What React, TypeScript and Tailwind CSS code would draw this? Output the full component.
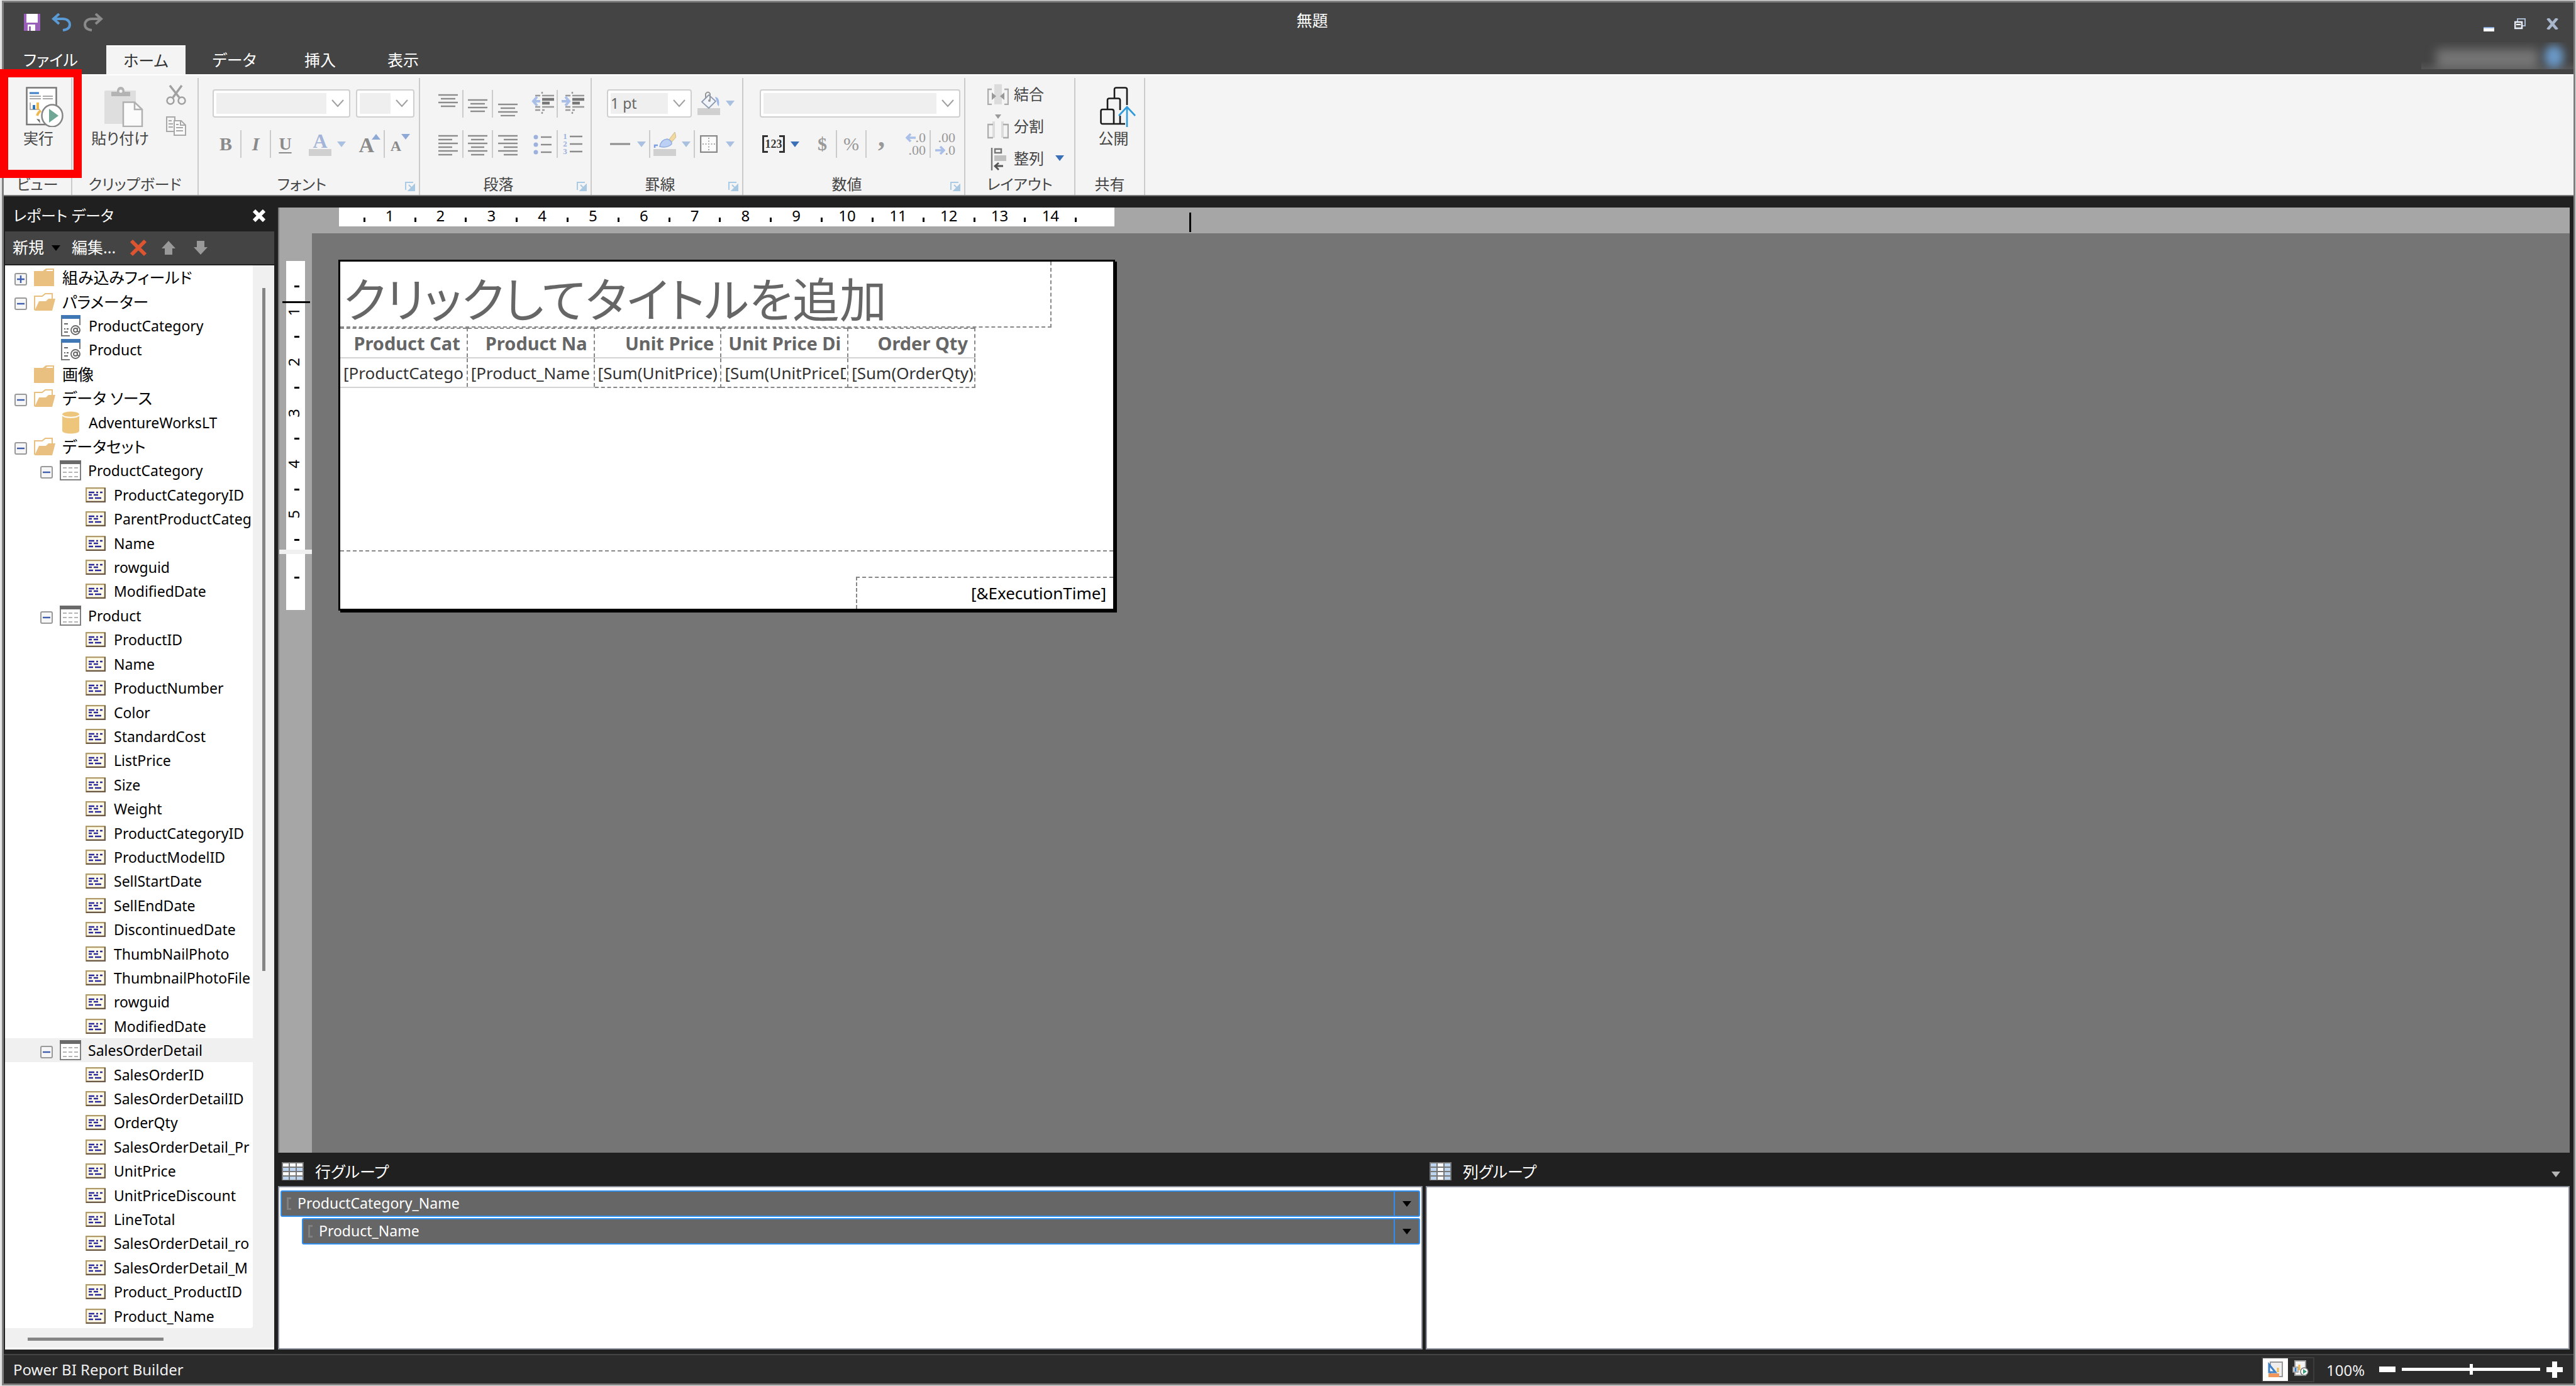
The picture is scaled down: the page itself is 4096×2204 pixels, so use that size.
import type { ReactNode } from 'react';

type IconProps = { className?: string };

/* ---------- small shared glyphs ---------- */

const Arrow = ({ className = 'text-[#a9c0e0]' }: IconProps) => (
  <svg aria-hidden="true" width="14" height="9" viewBox="0 0 14 9" className={`shrink-0 ${className}`}>
    <path d="M0 0H14L7 9Z" fill="currentColor" />
  </svg>
);

const Chevron = () => (
  <svg aria-hidden="true" width="20" height="13" viewBox="0 0 20 13" className="pointer-events-none shrink-0">
    <path d="M1 1L10 11L19 1" fill="none" stroke="#a0a0a0" strokeWidth="2" />
  </svg>
);

const Launcher = () => (
  <svg aria-hidden="true" width="16" height="15" viewBox="0 0 16 15">
    <path d="M1 13V1H13" fill="none" stroke="#a9cbe6" strokeWidth="2" />
    <path d="M6 5L11 10M15 5V15H5Z" fill="#a9c8e2" stroke="#a9c8e2" strokeWidth="2" />
  </svg>
);

/* ---------- ribbon icons ---------- */

const SaveIcon = () => (
  <svg aria-hidden="true" width="26" height="27" viewBox="0 0 26 27">
    <path d="M0 0H26V27H0Z" fill="#9a5fb8" />
    <path d="M4 0H22V14H4ZM6 17H18V27H6Z" fill="#fff" />
    <path d="M8 20H11V27H8Z" fill="#9a5fb8" />
  </svg>
);

const UndoIcon = ({ className }: IconProps) => (
  <svg aria-hidden="true" width="32" height="29" viewBox="0 0 32 29" className={className}>
    <path d="M12 1L3 9L12 17M3 9H18C26 9 29 14 29 18C29 23 26 26 18 27" fill="none" stroke="currentColor" strokeWidth="4" />
  </svg>
);

const RunIcon = () => (
  <svg aria-hidden="true" width="60" height="64" viewBox="0 0 60 64">
    <path d="M1.5 1.5H48.500V60H1.5Z" fill="#fff" stroke="#777" strokeWidth="2.500" />
    <path d="M6 10H21" stroke="#3f7fc4" strokeWidth="3" />
    <path d="M6 15H24M27 15H43M6 19H24M27 19H43" stroke="#aaa" strokeWidth="1.800" />
    <path d="M7 25V36H22" fill="none" stroke="#999" strokeWidth="1.500" />
    <path d="M11 29H15V36H11Z" fill="#2f75b5" />
    <path d="M17 25H21V36H17Z" fill="#f0b950" />
    <path d="M18 46Q20 40 24 38" fill="none" stroke="#f0b950" strokeWidth="4" />
    <path d="M17 51L22 52L23 58Z" fill="#666" />
    <ellipse cx="42" cy="46" rx="16.500" ry="17.500" fill="#fff" stroke="#858585" strokeWidth="2.500" />
    <path d="M37 35L52 46L37 57Z" fill="#6fa695" />
  </svg>
);

const PasteIcon = () => (
  <svg aria-hidden="true" width="62" height="64" viewBox="0 0 62 64">
    <path d="M0 8Q0 6 2 6H50V59H0Z" fill="#dedede" />
    <path d="M11 15V8H20Q20 0 26 0Q32 0 32 8H41V15Z" fill="#b3b3b3" />
    <circle cx="26" cy="7" r="2.500" fill="#f4f4f4" />
    <path d="M30 24.500H48L60 36V63H30Z" fill="#fbfbfb" stroke="#b0b0b0" strokeWidth="2.500" />
    <path d="M48 24.500V36H60" fill="none" stroke="#b0b0b0" strokeWidth="2.500" />
  </svg>
);

const CutIcon = () => (
  <svg aria-hidden="true" width="32" height="32" viewBox="0 0 32 32" fill="none" stroke="#a0a0a0">
    <path d="M6 1L21 20M25 1L11 20" strokeWidth="3.500" />
    <circle cx="7" cy="25" r="5.500" strokeWidth="2.500" />
    <circle cx="25" cy="25" r="5.500" strokeWidth="2.500" />
  </svg>
);

const CopyIcon = () => (
  <svg aria-hidden="true" width="32" height="32" viewBox="0 0 32 32" stroke="#a8a8a8" strokeWidth="2">
    <path d="M12 24H1V1H14V6" fill="none" />
    <path d="M4 7H9M4 12H11M4 17H11" />
    <path d="M13 7H24L31 14V30H13Z" fill="#fafafa" />
    <path d="M23 7V14H31M16 13H20M16 18H27M16 23H27" fill="none" />
  </svg>
);

/* Horizontal bars; each entry is [x, y, width]. */
const Bars = ({ bars }: { bars: number[][] }) => (
  <svg aria-hidden="true" width="32" height="40" viewBox="0 0 32 40">
    {bars.map(([x, y, w]) => (
      <path key={y} d={`M${x} ${y}H${x + w}`} stroke="#8c8c8c" strokeWidth="2.400" />
    ))}
  </svg>
);

const IndentIcon = ({ inward }: { inward?: boolean }) => (
  <svg aria-hidden="true" width="36" height="44" viewBox="0 0 36 44">
    <path d="M6 9H14M17 9H36M6 27H14M17 27H36M6 32H14M17 32H21M17 3V6M17 35V38" stroke="#999" strokeWidth="2.400" />
    <path d="M17 15H36M17 21H29" stroke="#777" strokeWidth="4.500" />
    {inward ? (
      <path d="M0 18H10M6 11L12 18L6 25" fill="none" stroke="#a9bfe8" strokeWidth="4" />
    ) : (
      <path d="M14 18H4M9 11L3 18L9 25" fill="none" stroke="#a9bfe8" strokeWidth="4" />
    )}
  </svg>
);

const BulletIcon = () => (
  <svg aria-hidden="true" width="32" height="40" viewBox="0 0 32 40">
    {[9, 21, 33].map((y) => (
      <g key={y}>
        <circle cx="5" cy={y} r="3.500" fill="#9db1dd" />
        <path d={`M13 ${y}H30`} stroke="#8c8c8c" strokeWidth="2.400" />
      </g>
    ))}
  </svg>
);

const NumberedIcon = () => (
  <span className="flex items-center gap-[4px]" aria-hidden="true">
    <span className="flex flex-col font-['Liberation_Serif',serif] text-[13px] leading-[12px] font-bold text-[#9db1dd]">
      <span>1</span>
      <span>2</span>
      <span>3</span>
    </span>
    <svg width="20" height="36" viewBox="0 0 20 36">
      <path d="M0 6H20M0 18H20M0 30H20" stroke="#8c8c8c" strokeWidth="2.400" />
    </svg>
  </span>
);

const BucketIcon = () => (
  <svg aria-hidden="true" width="36" height="38" viewBox="0 0 36 38">
    <path d="M0 27H36V38H0Z" fill="#d0d0d0" />
    <path d="M7 17L18 6L29 16L18 27Z" fill="#f2f6fc" stroke="#8f9bb0" strokeWidth="1.800" />
    <path d="M13 12V4Q17 -1 20 4V14" fill="none" stroke="#999" strokeWidth="2" />
    <path d="M28 9Q36 10 34 24Q31 22 31 17Z" fill="#9db8e6" />
    <circle cx="19" cy="15" r="2" fill="#999" />
  </svg>
);

const BrushIcon = () => (
  <svg aria-hidden="true" width="36" height="38" viewBox="0 0 36 38">
    <path d="M0 27H36V38H0Z" fill="#d0d0d0" />
    <path d="M24 13L34 0L36 8L28 17Z" fill="#f2d9a0" stroke="#c9b98f" strokeWidth="1" />
    <path d="M10 23Q12 12 22 11Q30 14 29 19Q22 26 10 23Z" fill="#bcd0f5" stroke="#93aede" strokeWidth="1.500" />
    <path d="M2 25V21H7" fill="none" stroke="#7fa0e0" strokeWidth="2.500" />
  </svg>
);

const BorderIcon = () => (
  <svg aria-hidden="true" width="28" height="28" viewBox="0 0 28 28">
    <path d="M1 1H27V27H1Z" fill="#fbfbfb" stroke="#8a8a8a" strokeWidth="2.500" />
    <path d="M14 4V25M4 14H25" stroke="#aaa" strokeWidth="2" strokeDasharray="2 2.500" />
  </svg>
);

const MergeIcon = () => (
  <svg aria-hidden="true" width="34" height="34" viewBox="0 0 34 34">
    <path d="M11 1H23V33H11Z" fill="#dcdcdc" />
    <path d="M7 9H1V33H7M27 9H33V33H27" fill="none" stroke="#ababab" strokeWidth="2.400" />
    <path d="M7 14L14 20L7 26ZM27 14L20 20L27 26Z" fill="#999" />
  </svg>
);

const SplitIcon = () => (
  <svg aria-hidden="true" width="34" height="40" viewBox="0 0 34 40">
    <path d="M12 1H22L17 8Z" fill="#999" />
    <path d="M8 12H12V38H8ZM22 12H26V38H22Z" fill="#dcdcdc" />
    <path d="M9 17H1V38H9M25 17H33V38H25" fill="none" stroke="#ababab" strokeWidth="2.400" />
  </svg>
);

const AlignIcon = () => (
  <svg aria-hidden="true" width="34" height="38" viewBox="0 0 34 38">
    <path d="M7 2V38" stroke="#777" strokeWidth="2.400" />
    <path d="M12 4H22V10H12Z" fill="none" stroke="#777" strokeWidth="2.400" />
    <path d="M11 14H30V23H11Z" fill="#c0c0c0" />
    <path d="M25 31H12M18 26L12 31L18 37" fill="none" stroke="#555" strokeWidth="2.800" />
  </svg>
);

const PublishIcon = () => (
  <svg aria-hidden="true" width="58" height="64" viewBox="0 0 58 64" fill="none">
    <path
      d="M23 19V4Q23 1.500 26 1.500H40Q43 1.500 43 4V29M12 37V21Q12 18.500 15 18.500H29Q32 18.500 32 21V37M4 36H19Q22 36 22 39V59H4Q1.500 59 1.500 56V39Q1.500 36 4 36ZM22 59H40M32 46V59"
      stroke="#1a1a1a"
      strokeWidth="2.600"
    />
    <path d="M43 64V33M30 46L43 32L56 46" stroke="#2d9bdb" strokeWidth="2.600" />
  </svg>
);

/* ---------- ribbon building blocks ---------- */

function Group({ label, className, launcher, children }: { label: string; className: string; launcher?: boolean; children: ReactNode }) {
  return (
    <section aria-label={label} className={`mt-[4px] flex shrink-0 flex-col border-r-2 border-[#cbcbcb] ${className}`}>
      <div className="h-[154px]">{children}</div>
      <div className="flex h-[30px] items-center">
        <span className="flex-1 text-center">{label}</span>
        {launcher && (
          <button aria-label={`${label}の設定`} className="flex w-[22px] items-center pt-[6px]">
            <Launcher />
          </button>
        )}
      </div>
    </section>
  );
}

function Tool({ label, className, sep, children }: { label: string; className: string; sep?: boolean; children: ReactNode }) {
  return (
    <button
      aria-label={label}
      className={`flex h-[44px] shrink-0 items-center ${sep ? 'border-r-2 border-[#cbcbcb]' : ''} ${className}`}
    >
      {children}
    </button>
  );
}

function Combo({ label, value, className }: { label: string; value?: string; className: string }) {
  return (
    <div className={`flex h-[45px] shrink-0 items-center rounded-[4px] border-2 border-[#cfcfcf] bg-white pl-[4px] ${className}`}>
      <select aria-label={label} className="h-[33px] min-w-0 flex-1 appearance-none bg-[#efefef] text-[23px] leading-[33px] text-[#666]">
        <option>{value}</option>
      </select>
      <span className="flex w-[36px] justify-center">
        <Chevron />
      </span>
    </div>
  );
}

const serif = "font-['Liberation_Serif',serif]";

function Ribbon() {
  return (
    <div className="flex h-[194px] shrink-0 border-t-2 border-b-2 border-t-white border-b-[#777] bg-[#f4f4f4] text-[24px] leading-[30px] text-[#444]">
      <Group label="ビュー" className="w-[109px]">
        <button className="flex w-full flex-col items-start pt-[14px] pl-[35px]">
          <RunIcon />
          <span className="-ml-[4px] leading-[36px]">実行</span>
        </button>
      </Group>

      <Group label="クリップボード" className="w-[201px]">
        <div className="flex pl-[31px]">
          <button className="flex w-[90px] flex-col items-center pt-[14px]">
            <span className="pl-[12px]">
              <PasteIcon />
            </span>
            <span className="leading-[36px] whitespace-nowrap">貼り付け</span>
          </button>
          <div className="ml-[28px] flex flex-col gap-[18px] pt-[11px]">
            <button aria-label="切り取り">
              <CutIcon />
            </button>
            <button aria-label="コピー">
              <CopyIcon />
            </button>
          </div>
        </div>
      </Group>

      <Group label="フォント" className="w-[352px]" launcher>
        <div className="flex gap-[9px] pt-[18px] pl-[22px]">
          <Combo label="フォント名" className="w-[219px]" />
          <Combo label="フォント サイズ" className="w-[93px]" />
        </div>
        <div className={`mt-[20px] flex pl-[20px] font-bold text-[#8a8a8a] ${serif}`}>
          <Tool label="太字" sep className="w-[48px] justify-center text-[30px]">B</Tool>
          <Tool label="斜体" sep className="w-[47px] justify-center text-[30px] italic">I</Tool>
          <Tool label="下線" className="w-[45px] justify-center text-[28px] underline decoration-2 underline-offset-4">U</Tool>
          <Tool label="フォントの色" className="w-[80px] gap-[9px] pl-[15px]">
            <span className="flex w-[36px] flex-col items-center border-b-[11px] border-[#d0d0d0] text-[32px] leading-[26px] text-[#a3b4d8]">A</span>
            <Arrow />
          </Tool>
          <Tool label="フォントの拡大" sep className="ml-[9px] w-[47px] items-start justify-end pt-[6px] pr-[5px] text-[34px] leading-[36px]">
            A
            <Arrow className="-ml-[4px] rotate-180 text-[#8fa9d6]" />
          </Tool>
          <Tool label="フォントの縮小" className="w-[45px] items-start justify-end pt-[6px] pr-[5px] text-[24px] leading-[38px]">
            A
            <Arrow className="text-[#8fa9d6]" />
          </Tool>
        </div>
      </Group>

      <Group label="段落" className="w-[273px]" launcher>
        <div className="flex pt-[19px] pl-[22px]">
          <Tool label="上揃え" sep className="w-[47px] justify-center">
            <Bars bars={[[0, 6, 31], [4, 12, 23], [0, 18, 31], [4, 24, 23]]} />
          </Tool>
          <Tool label="上下中央揃え" sep className="w-[47px] justify-center">
            <Bars bars={[[0, 14, 31], [4, 20, 23], [0, 26, 31], [4, 32, 23]]} />
          </Tool>
          <Tool label="下揃え" className="w-[47px] justify-center">
            <Bars bars={[[0, 21, 31], [4, 27, 23], [0, 33, 31], [4, 39, 23]]} />
          </Tool>
          <Tool label="インデントを減らす" sep className="ml-[9px] w-[47px] justify-center">
            <IndentIcon />
          </Tool>
          <Tool label="インデントを増やす" className="w-[47px] justify-center">
            <IndentIcon inward />
          </Tool>
        </div>
        <div className="mt-[20px] flex pl-[22px]">
          <Tool label="左揃え" sep className="w-[47px] justify-center">
            <Bars bars={[[0, 7, 31], [0, 13, 22], [0, 19, 31], [0, 25, 22], [0, 31, 31], [0, 37, 22]]} />
          </Tool>
          <Tool label="中央揃え" sep className="w-[47px] justify-center">
            <Bars bars={[[0, 7, 31], [5, 13, 21], [0, 19, 31], [5, 25, 21], [0, 31, 31], [5, 37, 21]]} />
          </Tool>
          <Tool label="右揃え" className="w-[47px] justify-center">
            <Bars bars={[[0, 7, 31], [9, 13, 22], [0, 19, 31], [9, 25, 22], [0, 31, 31], [9, 37, 22]]} />
          </Tool>
          <Tool label="箇条書き" sep className="ml-[9px] w-[47px] justify-center">
            <BulletIcon />
          </Tool>
          <Tool label="段落番号" className="w-[47px] justify-center">
            <NumberedIcon />
          </Tool>
        </div>
      </Group>

      <Group label="罫線" className="w-[241px]" launcher>
        <div className="flex gap-[9px] pt-[18px] pl-[24px]">
          <Combo label="線の太さ" value="1 pt" className="w-[135px]" />
          <Tool label="塗りつぶし" className="gap-[9px]">
            <BucketIcon />
            <Arrow />
          </Tool>
        </div>
        <div className="mt-[20px] flex pl-[24px]">
          <Tool label="線のスタイル" sep className="w-[69px] gap-[11px] pl-[5px]">
            <svg aria-hidden="true" width="32" height="4" viewBox="0 0 32 4">
              <path d="M0 2H32" stroke="#8c8c8c" strokeWidth="3" />
            </svg>
            <Arrow />
          </Tool>
          <Tool label="線の色" sep className="w-[71px] gap-[9px] pl-[5px]">
            <BrushIcon />
            <Arrow />
          </Tool>
          <Tool label="枠線" className="gap-[13px] pl-[8px]">
            <BorderIcon />
            <Arrow />
          </Tool>
        </div>
      </Group>

      <Group label="数値" className="w-[353px]" launcher>
        <div className="pt-[18px] pl-[26px]">
          <Combo label="表示形式" className="w-[319px]" />
        </div>
        <div className={`mt-[20px] flex pl-[30px] text-[#999] ${serif}`}>
          <Tool label="プレースホルダーのスタイル" className="gap-[9px]">
            <span className="relative flex h-[28px] w-[36px] items-center justify-center border-x-3 border-[#333] text-[18px] font-bold text-[#333]">
              <span className="absolute inset-x-0 top-0 flex justify-between">
                <span className="h-[3px] w-[6px] bg-[#333]" />
                <span className="h-[3px] w-[6px] bg-[#333]" />
              </span>
              <span className="absolute inset-x-0 bottom-0 flex justify-between">
                <span className="h-[3px] w-[6px] bg-[#333]" />
                <span className="h-[3px] w-[6px] bg-[#333]" />
              </span>
              123
            </span>
            <Arrow className="text-[#3a70b7]" />
          </Tool>
          <Tool label="通貨" sep className="ml-[15px] w-[45px] justify-center text-[30px] font-bold">$</Tool>
          <Tool label="パーセント" sep className="w-[47px] justify-center text-[30px]">%</Tool>
          <Tool label="桁区切り" className="w-[47px] items-start justify-center text-[44px] leading-[24px] font-bold">,</Tool>
          <Tool label="小数点以下の桁数を増やす" sep className="ml-[10px] w-[45px] flex-col items-end justify-center pr-[6px] text-[22px] leading-[20px]">
            <span className="flex items-center">
              <svg aria-hidden="true" width="16" height="14" viewBox="0 0 16 14">
                <path d="M16 7H3M8 1L2 7L8 13" fill="none" stroke="#a9bfe8" strokeWidth="3.500" />
              </svg>
              .0
            </span>
            <span>.00</span>
          </Tool>
          <Tool label="小数点以下の桁数を減らす" className="w-[45px] flex-col items-end justify-center pr-[6px] text-[22px] leading-[20px]">
            <span>.00</span>
            <span className="flex items-center">
              <svg aria-hidden="true" width="16" height="14" viewBox="0 0 16 14">
                <path d="M0 7H13M8 1L14 7L8 13" fill="none" stroke="#a9bfe8" strokeWidth="3.500" />
              </svg>
              .0
            </span>
          </Tool>
        </div>
      </Group>

      <Group label="レイアウト" className="w-[175px]">
        <div className="flex flex-col pl-[35px] [&>button]:flex [&>button]:h-[51px] [&>button]:items-center [&>button]:gap-[8px]">
          <button>
            <MergeIcon />
            結合
          </button>
          <button>
            <SplitIcon />
            分割
          </button>
          <button>
            <AlignIcon />
            整列
            <span className="pl-[10px]">
              <Arrow className="text-[#3a70b7]" />
            </span>
          </button>
        </div>
      </Group>

      <Group label="共有" className="w-[111px]">
        <button className="flex w-full flex-col items-center pt-[14px] pl-[12px]">
          <span className="pl-[14px]">
            <PublishIcon />
          </span>
          <span className="leading-[36px]">公開</span>
        </button>
      </Group>
    </div>
  );
}

/* ---------- title bar ---------- */

function TitleBar() {
  return (
    <header className="shrink-0 bg-[#444] text-[25px] leading-[46px] text-white">
      <div className="flex h-[68px] items-start">
        <div className="flex items-center gap-[18px] pt-[17px] pl-[32px]">
          <button aria-label="保存">
            <SaveIcon />
          </button>
          <button aria-label="元に戻す">
            <UndoIcon className="text-[#5b9bd5]" />
          </button>
          <button aria-label="やり直し">
            <UndoIcon className="-scale-x-100 text-[#8a8a8a]" />
          </button>
        </div>
        <h1 className="flex-1 pt-[5px] pl-[60px] text-center">無題</h1>
        <div className="flex items-center gap-[32px] pt-[22px] pr-[23px]">
          <button aria-label="最小化" className="flex h-[24px] items-end">
            <span className="block h-[7px] w-[17px] border-t-2 border-[#8fb0e0] bg-white" />
          </button>
          <button aria-label="元のサイズに戻す">
            <svg aria-hidden="true" width="18" height="18" viewBox="0 0 18 18">
              <path d="M5 1H17V12H5Z" fill="#444" stroke="#a8b8cf" strokeWidth="2" />
              <path d="M1 6H12V16H1Z" fill="#555" stroke="#e8effa" strokeWidth="2.500" />
              <path d="M3 10H10" stroke="#fff" strokeWidth="2" />
            </svg>
          </button>
          <button aria-label="閉じる">
            <svg aria-hidden="true" width="21" height="18" viewBox="0 0 21 18">
              <path d="M3 0L18 18M18 0L3 18" stroke="#a9b7cd" strokeWidth="4.500" />
            </svg>
          </button>
        </div>
      </div>
      <nav className="flex h-[46px]">
        <button className="w-[163px] pr-[14px]">ファイル</button>
        <button className="w-[126px] border-t-2 border-white bg-[#f4f4f4] leading-[42px] text-[#333]">ホーム</button>
        <button className="w-[155px]">データ</button>
        <button className="w-[118px]">挿入</button>
        <button className="w-[146px]">表示</button>
        <div aria-label="アカウント" className="-mt-[5px] ml-auto flex h-[43px] w-[242px] items-end overflow-hidden bg-linear-to-b from-[#444] from-70% to-[#555]">
          <span className="ml-[24px] h-[32px] w-[162px] bg-[#757575] blur-[8px]" />
          <span className="mb-[2px] ml-[10px] h-[36px] w-[30px] rounded-full bg-[#6a98c6] blur-[7px]" />
        </div>
      </nav>
    </header>
  );
}

/* ---------- report data tree ---------- */

type Kind = 'folder' | 'open' | 'param' | 'db' | 'table' | 'field';
type Node = { text: string; kind: Kind; exp?: '+' | '-'; selected?: boolean };

const fields = (...names: string[]): Node[] => names.map((text) => ({ text, kind: 'field' }));

const nodes: Node[] = [
  { text: '組み込みフィールド', kind: 'folder', exp: '+' },
  { text: 'パラメーター', kind: 'open', exp: '-' },
  { text: 'ProductCategory', kind: 'param' },
  { text: 'Product', kind: 'param' },
  { text: '画像', kind: 'folder' },
  { text: 'データ ソース', kind: 'open', exp: '-' },
  { text: 'AdventureWorksLT', kind: 'db' },
  { text: 'データセット', kind: 'open', exp: '-' },
  { text: 'ProductCategory', kind: 'table', exp: '-' },
  ...fields('ProductCategoryID', 'ParentProductCateg', 'Name', 'rowguid', 'ModifiedDate'),
  { text: 'Product', kind: 'table', exp: '-' },
  ...fields(
    'ProductID', 'Name', 'ProductNumber', 'Color', 'StandardCost', 'ListPrice', 'Size', 'Weight', 'ProductCategoryID',
    'ProductModelID', 'SellStartDate', 'SellEndDate', 'DiscontinuedDate', 'ThumbNailPhoto', 'ThumbnailPhotoFile',
    'rowguid', 'ModifiedDate',
  ),
  { text: 'SalesOrderDetail', kind: 'table', exp: '-', selected: true },
  ...fields(
    'SalesOrderID', 'SalesOrderDetailID', 'OrderQty', 'SalesOrderDetail_Pr', 'UnitPrice', 'UnitPriceDiscount',
    'LineTotal', 'SalesOrderDetail_ro', 'SalesOrderDetail_M', 'Product_ProductID', 'Product_Name',
  ),
];

function NodeIcon({ kind }: { kind: Kind }) {
  switch (kind) {
    case 'folder':
      return (
        <svg aria-hidden="true" width="34" height="28" viewBox="0 0 34 28">
          <path d="M0 4H14L19 0H32V28H0Z" fill="#e9c080" />
          <path d="M19 4L21 2H30V4Z" fill="#fff" />
        </svg>
      );
    case 'open':
      return (
        <svg aria-hidden="true" width="34" height="28" viewBox="0 0 34 28">
          <path d="M1 27V5H13L18 1H29V10" fill="#fff" stroke="#e9c080" strokeWidth="2" />
          <path d="M1 28L8 13H19L23 9H34L29 28Z" fill="#e9c080" />
        </svg>
      );
    case 'param':
      return (
        <svg aria-hidden="true" width="32" height="34" viewBox="0 0 32 34">
          <path d="M15 33H2V1H31V16" fill="#fff" stroke="#777" strokeWidth="2" />
          <path d="M1 0H32V6H1Z" fill="#3f78b5" />
          <path d="M6 14H12M6 22H8M10 22H13M6 27H12" stroke="#666" strokeWidth="2" />
          <circle cx="24" cy="24" r="7" fill="#fff" stroke="#666" strokeWidth="1.800" />
          <circle cx="24" cy="24" r="3" fill="none" stroke="#666" strokeWidth="1.800" />
          <path d="M27 20V26Q31 28 31 23" fill="none" stroke="#666" strokeWidth="1.600" />
        </svg>
      );
    case 'db':
      return (
        <svg aria-hidden="true" width="32" height="36" viewBox="0 0 32 36">
          <path d="M3 5V31C3 37 30 37 30 31V5C30 -1 3 -1 3 5Z" fill="#edc67c" />
          <path d="M3 6C6 11 27 11 30 6" fill="none" stroke="#fff" strokeWidth="2" />
        </svg>
      );
    case 'table':
      return (
        <svg aria-hidden="true" width="34" height="32" viewBox="0 0 34 32">
          <path d="M1 1H33V31H1Z" fill="#fff" stroke="#808080" strokeWidth="2" />
          <path d="M0 0H34V6H0Z" fill="#6a6a6a" />
          <path d="M5 12H29M5 19H29M5 26H29" stroke="#b5b5b5" strokeWidth="2" strokeDasharray="6 3" />
        </svg>
      );
    case 'field':
      return (
        <svg aria-hidden="true" width="32" height="24" viewBox="0 0 32 24">
          <path d="M1 1H31V23H1Z" fill="#fffbe8" stroke="#b09a6a" strokeWidth="2.400" />
          <path d="M1 23H31V1" fill="none" stroke="#6a5844" strokeWidth="2.400" />
          <path d="M5 8H14M17 8H20M23 8H27M5 12H10M13 12H20M5 17H12M15 17H25" stroke="#2a2a9a" strokeWidth="2.400" />
        </svg>
      );
  }
}

const indentOf: Record<Kind, string> = {
  folder: 'pl-[15px]',
  open: 'pl-[15px]',
  param: 'pl-[57px]',
  db: 'pl-[57px]',
  table: 'pl-[56px]',
  field: 'pl-[97px]',
};

function TreeRow({ node }: { node: Node }) {
  const japanese = node.kind === 'folder' || node.kind === 'open';
  return (
    <li className={`flex min-h-0 flex-1 basis-0 items-center gap-[11px] whitespace-nowrap ${indentOf[node.kind]} ${node.selected ? 'bg-[#f0f0f0]' : ''}`}>
      {node.exp ? (
        <button aria-label={node.exp === '+' ? '展開' : '折りたたみ'} className="mt-[6px] flex h-[20px] w-[20px] shrink-0 items-center justify-center rounded-[3px] border-2 border-[#999] bg-[#f6f6f6]">
          <svg aria-hidden="true" width="12" height="12" viewBox="0 0 12 12">
            <path d={node.exp === '+' ? 'M0 6H12M6 0V12' : 'M0 6H12'} stroke="#3f5fae" strokeWidth="2.400" />
          </svg>
        </button>
      ) : (
        <span className="w-[20px] shrink-0" />
      )}
      <span className="flex w-[34px] shrink-0 items-center">
        <NodeIcon kind={node.kind} />
      </span>
      <span className={`leading-[36px] ${japanese ? 'text-[25px]' : 'text-[23px]'}`}>{node.text}</span>
    </li>
  );
}

const MoveArrow = ({ className = '' }: IconProps) => (
  <svg aria-hidden="true" width="22" height="22" viewBox="0 0 22 22" className={className}>
    <path d="M11 0L22 12H17V22H5V12H0Z" fill="#999" />
  </svg>
);

function ReportData() {
  return (
    <aside className="ml-[2px] flex w-[428px] shrink-0 flex-col text-white">
      <div className="flex h-[56px] items-center justify-between pt-[6px] pr-[14px] pl-[13px]">
        <h2 className="text-[24px] leading-[44px]">レポート データ</h2>
        <button aria-label="閉じる">
          <svg aria-hidden="true" width="20" height="20" viewBox="0 0 20 20">
            <path d="M2 2L18 18M18 2L2 18" stroke="#fff" strokeWidth="6" />
          </svg>
        </button>
      </div>
      <div className="flex h-[54px] items-center border-b-2 border-[#202020] bg-[#444] pl-[12px] text-[25px]">
        <button className="flex items-center gap-[12px]">
          新規
          <Arrow className="text-black" />
        </button>
        <button className="ml-[18px] w-[78px] text-left">編集...</button>
        <button aria-label="削除" className="ml-[14px]">
          <svg aria-hidden="true" width="28" height="28" viewBox="0 0 28 28">
            <path d="M3 3L25 25M25 3L3 25" stroke="#dc5430" strokeWidth="6" />
          </svg>
        </button>
        <button aria-label="上へ移動" className="ml-[23px]">
          <MoveArrow />
        </button>
        <button aria-label="下へ移動" className="ml-[29px]">
          <MoveArrow className="rotate-180" />
        </button>
      </div>
      <div className="flex min-h-0 flex-1 bg-[#f0f0f0] text-black">
        <ul className="flex min-w-0 flex-1 flex-col rounded-br-[4px] bg-white">
          {nodes.map((node, i) => (
            <TreeRow key={i} node={node} />
          ))}
        </ul>
        <div className="w-[34px] shrink-0 pt-[36px] pl-[15px]">
          <div className="h-[1086px] w-[5px] bg-[#858585]" />
        </div>
      </div>
      <div className="h-[34px] shrink-0 border-b-3 border-white bg-[#f0f0f0] pt-[15px] pl-[36px]">
        <div className="h-[5px] w-[216px] bg-[#858585]" />
      </div>
    </aside>
  );
}

/* ---------- design surface ---------- */

const halfSteps = (count: number) => Array.from({ length: count }, (_, i) => (i % 2 ? String((i + 1) / 2) : ''));

function HorizontalRuler() {
  return (
    <div className="flex h-[41px] shrink-0 bg-[#a6a6a6] pl-[95px]">
      <div className="grid h-[30px] w-[1233px] grid-cols-[repeat(29,minmax(0,1fr))] bg-white pr-[41px] pl-[20px] text-[24px] leading-[26px] text-black">
        {halfSteps(29).map((n, i) => (
          <span key={i} className="flex justify-center">
            {n || <span className="mt-[16px] h-[7px] w-[3px] bg-black" />}
          </span>
        ))}
      </div>
      <div className="mt-[8px] ml-[119px] h-[31px] w-[3px] bg-black" />
    </div>
  );
}

function VerticalRuler() {
  return (
    <div className="relative flex w-[52px] shrink-0 flex-col bg-[#a6a6a6] pt-[44px]">
      <div className="ml-[11px] h-[459px] w-[30px] bg-white pt-[20px]">
        <div className="grid h-[444px] grid-rows-[repeat(11,minmax(0,1fr))] text-[24px] leading-[26px] text-black">
          {halfSteps(11).map((n, i) => (
            <span key={i} className="flex items-center justify-center">
              {n ? <span className="mr-[6px] -rotate-90">{n}</span> : <span className="ml-[3px] h-[3px] w-[8px] bg-black" />}
            </span>
          ))}
        </div>
      </div>
      <div className="h-[7px] bg-[#f0f0f0]" />
      <div className="ml-[11px] flex h-[89px] w-[30px] justify-center bg-white pt-[36px]">
        <span className="ml-[3px] h-[3px] w-[8px] bg-black" />
      </div>
      <div className="absolute top-[108px] left-[5px] h-[3px] w-[44px] bg-black" />
    </div>
  );
}

const columns = [
  { head: 'Product Cat', cell: '[ProductCatego', total: false },
  { head: 'Product Na', cell: '[Product_Name', total: false },
  { head: 'Unit Price', cell: '[Sum(UnitPrice)', total: true },
  { head: 'Unit Price Di', cell: '[Sum(UnitPriceD', total: true },
  { head: 'Order Qty', cell: '[Sum(OrderQty)', total: true },
];

function ReportPage() {
  return (
    <article className="flex h-[558px] w-[1235px] flex-col border-3 border-black bg-white shadow-[3px_3px_0_#000]">
      <div className="h-[105px] w-[1131px] shrink-0 border-r-2 border-b-2 border-dashed border-[#888] pl-[5px]">
        <h2 className="pt-[18px] text-[75px] leading-[84px] whitespace-nowrap text-[#666]">クリックしてタイトルを追加</h2>
      </div>
      <table className="w-[1010px] table-fixed border-collapse">
        <thead>
          <tr className="h-[47px] border-t-2 border-b-2 border-t-[#888] border-b-[#d3d3d3] [border-top-style:dashed]">
            {columns.map((c) => (
              <th key={c.head} className="border-r-2 border-[#888] p-0 pr-[10px] text-right text-[29px] leading-[42px] font-bold whitespace-nowrap text-[#666] [border-right-style:dashed]">
                {c.head}
              </th>
            ))}
          </tr>
        </thead>
        <tbody>
          <tr className="h-[47px]">
            {columns.map((c) => (
              <td
                key={c.head}
                className={`border-r-2 border-b-2 border-r-[#888] p-0 pr-[2px] pl-[5px] [border-right-style:dashed] ${c.total ? 'border-b-[#888] [border-bottom-style:dashed]' : 'border-b-[#d3d3d3]'}`}
              >
                <div className="overflow-hidden text-[26px] leading-[42px] whitespace-nowrap text-[#333]">{c.cell}</div>
              </td>
            ))}
          </tr>
        </tbody>
      </table>
      <footer className="mt-auto flex h-[93px] shrink-0 items-end justify-end border-t-2 border-dashed border-[#888]">
        <div className="h-[51px] w-[409px] border-t-2 border-l-2 border-dashed border-[#888] pr-[11px] text-right text-[26px] leading-[48px] text-black">
          [&amp;ExecutionTime]
        </div>
      </footer>
    </article>
  );
}

/* ---------- grouping pane ---------- */

function GroupGrid({ byColumn }: { byColumn?: boolean }) {
  return (
    <svg aria-hidden="true" width="35" height="29" viewBox="0 0 35 29">
      <path d="M0 0H35V29H0Z" fill="#777" />
      {[0, 1, 2, 3].map((r) =>
        [0, 1, 2].map((c) => (
          <path key={`${r}${c}`} d={`M${2 + c * 11} ${2 + r * 7}h9v5h-9z`} fill={(byColumn ? c === 1 : r % 2 === 0) ? '#fff' : '#bcd4ee'} />
        )),
      )}
    </svg>
  );
}

function GroupItem({ name, className }: { name: string; className: string }) {
  return (
    <li className={`flex h-[42px] items-stretch rounded-[3px] border-2 border-[#2f8eee] bg-[#666] text-[23px] leading-[36px] text-white ${className}`}>
      <span className="mt-[9px] ml-[8px] h-[20px] w-[7px] border-3 border-r-0 border-[#808080]" />
      <span className="flex-1 pl-[10px]">{name}</span>
      <button aria-label={`${name} のメニュー`} className="flex w-[40px] items-center justify-center border-l-2 border-[#2f8eee]">
        <Arrow className="text-black" />
      </button>
    </li>
  );
}

function GroupingPane() {
  return (
    <div className="grid h-[313px] shrink-0 grid-cols-[1820px_1fr] gap-x-[5px] bg-[#202020] text-white">
      <section className="flex flex-col">
        <div className="flex h-[53px] items-center gap-[18px] pt-[6px] pl-[6px] text-[25px] leading-[40px]">
          <GroupGrid />
          <h2>行グループ</h2>
        </div>
        <ul className="flex flex-1 flex-col gap-[2px] border-2 border-[#8a8f99] bg-white px-[2px] pt-[5px]">
          <GroupItem name="ProductCategory_Name" className="" />
          <GroupItem name="Product_Name" className="ml-[34px]" />
        </ul>
      </section>
      <section className="flex flex-col">
        <div className="flex h-[53px] items-center gap-[18px] pt-[6px] pr-[15px] pl-[6px] text-[25px] leading-[40px]">
          <GroupGrid byColumn />
          <h2 className="flex-1">列グループ</h2>
          <button aria-label="グループ化のメニュー" className="pt-[10px]">
            <Arrow className="text-[#b5b5b5]" />
          </button>
        </div>
        <div className="flex-1 border-2 border-[#8a8f99] bg-white" />
      </section>
    </div>
  );
}

/* ---------- status bar ---------- */

function StatusBar() {
  return (
    <footer className="flex h-[47px] shrink-0 items-center border-t-2 border-[#444] bg-[#2b2b2b] pr-[17px] pl-[15px] text-[24px] text-[#f0f0f0]">
      <span className="flex-1">Power BI Report Builder</span>
      <div className="flex h-[40px] w-[84px] items-center border-2 border-[#3c3c3c]">
        <button aria-label="デザイン" className="flex h-[36px] w-[40px] items-center justify-center bg-white">
          <svg aria-hidden="true" width="24" height="26" viewBox="0 0 24 26">
            <path d="M4 1H23V24H4Z" fill="#eee" stroke="#999" strokeWidth="2" />
            <path d="M2 5V17H12Z" fill="#fff" stroke="#3f7fc4" strokeWidth="3" />
            <path d="M16 10V17" stroke="#f0b950" strokeWidth="3" />
            <path d="M1 19H18V25H1Z" fill="#f0975c" />
          </svg>
        </button>
        <button aria-label="実行プレビュー" className="flex flex-1 items-center justify-center pb-[4px]">
          <svg aria-hidden="true" width="26" height="26" viewBox="0 0 26 26">
            <path d="M4 1H21V24H4Z" fill="#f4f4f4" stroke="#999" strokeWidth="2" />
            <path d="M1 11H9V19H1Z" fill="#e8e8e8" stroke="#999" strokeWidth="1.500" />
            <path d="M5 12V18" stroke="#3f7fc4" strokeWidth="3" />
            <path d="M11 7V16" stroke="#f0b950" strokeWidth="3" />
            <circle cx="19" cy="18" r="6" fill="#fff" stroke="#777" strokeWidth="1.500" />
            <path d="M17 14L23 18L17 22Z" fill="#3c9a7a" />
          </svg>
        </button>
      </div>
      <span className="ml-[19px] w-[84px] pt-[2px]">100%</span>
      <button aria-label="縮小" className="flex h-[26px] w-[26px] items-center">
        <span className="h-[9px] w-full bg-white" />
      </button>
      <input
        type="range"
        aria-label="ズーム"
        defaultValue={50}
        className="mx-[10px] h-[5px] w-[220px] appearance-none bg-white [&::-webkit-slider-thumb]:h-[17px] [&::-webkit-slider-thumb]:w-[5px] [&::-webkit-slider-thumb]:appearance-none [&::-webkit-slider-thumb]:bg-white"
      />
      <button aria-label="拡大">
        <svg aria-hidden="true" width="26" height="26" viewBox="0 0 26 26">
          <path d="M9 0H17V9H26V17H17V26H9V17H0V9H9Z" fill="#fff" />
        </svg>
      </button>
    </footer>
  );
}

export default function App() {
  return (
    <div
      lang="ja"
      className="relative h-screen overflow-hidden bg-[#e4e6e6] pt-px pr-px pb-px pl-[3px] font-['Noto_Sans','Noto_Sans_CJK_JP',sans-serif] [font-feature-settings:'palt']"
    >
      <div className="flex h-full flex-col border-3 border-[#808080]">
        <TitleBar />
        <Ribbon />
        <main className="flex min-h-0 flex-1 bg-[#202020] pb-[7px]">
          <ReportData />
          <div className="ml-[6px] flex min-w-0 flex-1 flex-col pt-[18px] pr-[6px]">
            <div className="flex min-h-0 flex-1 flex-col border-l-2 border-[#777]">
              <HorizontalRuler />
              <div className="flex min-h-0 flex-1">
                <VerticalRuler />
                <div className="flex-1 bg-[#757575] pt-[42px] pl-[42px]">
                  <ReportPage />
                </div>
              </div>
            </div>
            <GroupingPane />
          </div>
        </main>
        <StatusBar />
      </div>
      <div className="pointer-events-none absolute top-[110px] left-0 h-[173px] w-[130px] border-[13px] border-[#ff0000]" />
    </div>
  );
}
